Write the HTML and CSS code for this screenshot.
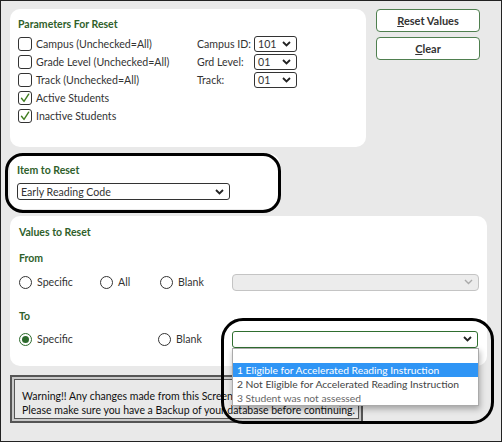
FILE: index.html
```html
<!DOCTYPE html>
<html>
<head>
<meta charset="utf-8">
<link rel="stylesheet" href="styles.css">
</head>
<body>
<div class="screen">
  <div class="top">
    <section class="panel params">
      <div class="heading">Parameters For Reset</div>
      <div class="params-body">
        <div class="checks">
          <div class="check-row"><span class="box"></span><span>Campus (Unchecked=All)</span></div>
          <div class="check-row"><span class="box"></span><span>Grade Level (Unchecked=All)</span></div>
          <div class="check-row"><span class="box"></span><span>Track (Unchecked=All)</span></div>
          <div class="check-row"><span class="box"><svg width="10" height="10" viewBox="0 0 10 10"><path d="M1.5 5.2 L4 8.4 L8.7 1.2" fill="none" stroke="#3f7d1f" stroke-width="1.4" stroke-linecap="round" stroke-linejoin="round"/></svg></span><span>Active Students</span></div>
          <div class="check-row"><span class="box"><svg width="10" height="10" viewBox="0 0 10 10"><path d="M1.5 5.2 L4 8.4 L8.7 1.2" fill="none" stroke="#3f7d1f" stroke-width="1.4" stroke-linecap="round" stroke-linejoin="round"/></svg></span><span>Inactive Students</span></div>
        </div>
        <div class="fields">
          <span class="field-label">Campus ID:</span>
          <span class="sel small"><span>101</span><svg class="chev" width="9" height="6" viewBox="0 0 9 6"><path d="M1 1 L4.5 4.5 L8 1" fill="none" stroke="#222" stroke-width="1.8"/></svg></span>
          <span class="field-label">Grd Level:</span>
          <span class="sel small"><span>01</span><svg class="chev" width="9" height="6" viewBox="0 0 9 6"><path d="M1 1 L4.5 4.5 L8 1" fill="none" stroke="#222" stroke-width="1.8"/></svg></span>
          <span class="field-label">Track:</span>
          <span class="sel small"><span>01</span><svg class="chev" width="9" height="6" viewBox="0 0 9 6"><path d="M1 1 L4.5 4.5 L8 1" fill="none" stroke="#222" stroke-width="1.8"/></svg></span>
        </div>
      </div>
    </section>
    <div class="buttons">
      <button class="btn"><u>R</u>eset Values</button>
      <button class="btn"><u>C</u>lear</button>
    </div>
  </div>

  <section class="panel item">
    <div class="heading">Item to Reset</div>
    <span class="sel item-sel"><span>Early Reading Code</span><svg class="chev" width="9" height="6" viewBox="0 0 9 6"><path d="M1 1 L4.5 4.5 L8 1" fill="none" stroke="#222" stroke-width="1.8"/></svg></span>
  </section>

  <section class="panel values">
    <div class="heading">Values to Reset</div>
    <div class="heading sub from">From</div>
    <div class="radio-row row-from">
      <label class="radio-item"><span class="radio"></span>Specific</label>
      <label class="radio-item"><span class="radio"></span>All</label>
      <label class="radio-item"><span class="radio"></span>Blank</label>
      <span class="sel disabled"><span></span><svg class="chev" width="9" height="6" viewBox="0 0 9 6"><path d="M1 1 L4.5 4.5 L8 1" fill="none" stroke="#aaa" stroke-width="1.4"/></svg></span>
    </div>
    <div class="heading sub to">To</div>
    <div class="radio-row row-to">
      <label class="radio-item"><span class="radio checked"></span>Specific</label>
      <label class="radio-item"><span class="radio"></span>Blank</label>
      <div class="to-wrap">
        <span class="sel active"><span></span><svg class="chev" width="9" height="6" viewBox="0 0 9 6"><path d="M1 1 L4.5 4.5 L8 1" fill="none" stroke="#222" stroke-width="1.8"/></svg></span>
        <ul class="dropdown">
          <li class="opt blank"></li>
          <li class="opt hl">1 Eligible for Accelerated Reading Instruction</li>
          <li class="opt">2 Not Eligible for Accelerated Reading Instruction</li>
          <li class="opt dim">3 Student was not assessed</li>
        </ul>
      </div>
    </div>
  </section>

  <div class="warning">
    <p>Warning!! Any changes made from this Screen cannot be undone.</p>
    <p>Please make sure you have a Backup of your database before continuing.</p>
  </div>

  <div class="oval oval-item"></div>
  <div class="oval oval-to"></div>
</div>
</body>
</html>
```

FILE: styles.css
```css
* { box-sizing: border-box; }

body {
  margin: 0;
  font-family: Lato, "Liberation Sans", sans-serif;
  font-size: 11px;
  color: #333;
}

.screen {
  position: relative;
  width: 502px;
  height: 442px;
  border: 1px solid #222;
  background: #e9e9e9;
  padding: 8px 0 0 9px;
  overflow: hidden;
}

.top {
  display: flex;
  gap: 10px;
}

.panel {
  background: #fff;
  border-radius: 10px;
}

.heading {
  color: #2f5f2b;
  font-weight: 700;
  font-size: 10.5px;
  line-height: 14px;
}

/* Parameters */
.params {
  width: 356px;
  height: 138px;
  padding: 8px 8px 0 8px;
}

.params-body {
  display: flex;
  margin-top: 4px;
}

.checks {
  width: 179px;
}

.check-row {
  height: 18px;
  display: flex;
  align-items: center;
  gap: 4px;
  font-size: 10.6px;
}

.box {
  width: 14px;
  height: 14px;
  border: 1.5px solid #333;
  border-radius: 3px;
  display: flex;
  align-items: center;
  justify-content: center;
  background: #fff;
}

.fields {
  display: grid;
  grid-template-columns: 57px 43px;
  grid-auto-rows: 18px;
  align-items: center;
}

.field-label {
  color: #333;
  font-size: 10.6px;
}

.sel {
  height: 16px;
  border: 1px solid #333;
  border-radius: 3px;
  display: flex;
  align-items: center;
  justify-content: space-between;
  padding: 0 5px 0 3px;
  background: #fff;
  font-size: 10.6px;
  color: #333;
}

.sel.small {
  width: 43px;
}

/* Buttons */
.buttons {
  display: flex;
  flex-direction: column;
  gap: 5px;
  width: 104px;
}

.btn {
  height: 23px;
  border: 1px solid #4f7f4f;
  border-radius: 4px;
  background: #fff;
  font-family: Lato, "Liberation Sans", sans-serif;
  font-weight: 700;
  font-size: 11px;
  color: #333;
  padding: 0;
}

/* Item to reset */
.item {
  width: 270px;
  height: 55px;
  margin-top: 7px;
  padding: 9px 0 0 7px;
}

.item-sel {
  margin-top: 6px;
  width: 213px;
  height: 17px;
}

/* Values */
.values {
  width: 477px;
  height: 150px;
  margin-top: 7px;
  padding: 9px 8px 0 9px;
}

.sub.from { margin-top: 12px; }
.sub.to { margin-top: 18px; }

.radio-row {
  display: grid;
  height: 18px;
  align-items: center;
}

.row-from {
  margin-top: 8px;
  grid-template-columns: 81px 60px 72px 247px;
}

.row-to {
  margin-top: 7px;
  grid-template-columns: 139px 74px 246px;
}

.radio-item {
  display: flex;
  align-items: center;
  gap: 5px;
  color: #333;
  font-size: 10.6px;
}

.radio {
  width: 13px;
  height: 13px;
  border: 1.3px solid #333;
  border-radius: 50%;
  display: flex;
  align-items: center;
  justify-content: center;
  background: #fff;
}

.radio.checked {
  border: 1.6px solid #2d6b2d;
}

.radio.checked::after {
  content: "";
  width: 7px;
  height: 7px;
  border-radius: 50%;
  background: #2d6b2d;
}

.sel.disabled {
  height: 17px;
  background: #ececec;
  border-color: #c4c4c4;
  border-radius: 4px;
}

.to-wrap {
  position: relative;
}

.sel.active {
  height: 17px;
  border: 1.5px solid #2f6e2f;
  border-radius: 3px;
}

.dropdown {
  position: absolute;
  top: 100%;
  left: 0;
  width: 247px;
  margin: 0;
  padding: 0;
  list-style: none;
  background: #fff;
  border: 1px solid #aaa;
  box-shadow: 1px 3px 6px rgba(0,0,0,0.3);
  z-index: 2;
}

.opt {
  height: 14px;
  line-height: 14px;
  padding-left: 4px;
  font-size: 10.3px;
  color: #444;
  white-space: nowrap;
}

.opt.hl {
  background: #2f95f5;
  color: #fff;
}

.opt.dim {
  color: #666;
}

/* Warning */
.warning {
  width: 353px;
  height: 48px;
  margin-top: 9px;
  border: 2px solid #555;
  box-shadow: inset 0 0 0 2px #c9c9c9, inset 0 0 0 3px #555;
  padding: 12px 0 0 10px;
  font-size: 10.5px;
  color: #111;
  white-space: nowrap;
  overflow: hidden;
}

.warning p {
  margin: 0;
  line-height: 14px;
}

/* annotation ovals */
.oval {
  position: absolute;
  border: 3px solid #000;
  z-index: 3;
}

.oval-item {
  left: 4px;
  top: 152px;
  width: 276px;
  height: 60px;
  border-radius: 18px;
}

.oval-to {
  left: 220px;
  top: 317px;
  width: 273px;
  height: 106px;
  border-width: 3.5px;
  border-radius: 22px;
}
```
